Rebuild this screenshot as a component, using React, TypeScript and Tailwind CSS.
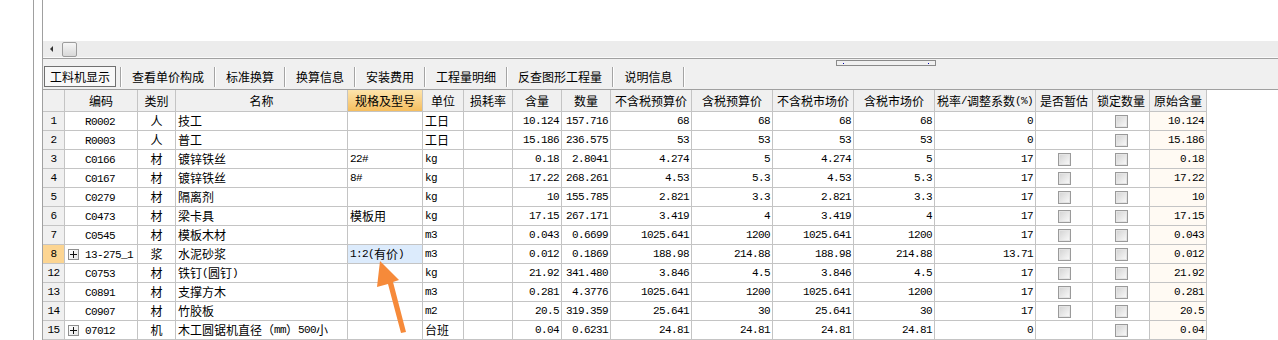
import React from 'react';

type Row = {
  n: string;
  code: string;
  plus?: boolean;
  cat: string;
  name: string;
  spec: string;
  unit: string;
  qty: string;
  amt: string;
  p1: string;
  p2: string;
  p3: string;
  p4: string;
  tax: string;
  est: boolean;
  orig: string;
};

const rows: Row[] = [
  { n: '1', code: 'R0002', cat: '人', name: '技工', spec: '', unit: '工日', qty: '10.124', amt: '157.716', p1: '68', p2: '68', p3: '68', p4: '68', tax: '0', est: false, orig: '10.124' },
  { n: '2', code: 'R0003', cat: '人', name: '普工', spec: '', unit: '工日', qty: '15.186', amt: '236.575', p1: '53', p2: '53', p3: '53', p4: '53', tax: '0', est: false, orig: '15.186' },
  { n: '3', code: 'C0166', cat: '材', name: '镀锌铁丝', spec: '22#', unit: 'kg', qty: '0.18', amt: '2.8041', p1: '4.274', p2: '5', p3: '4.274', p4: '5', tax: '17', est: true, orig: '0.18' },
  { n: '4', code: 'C0167', cat: '材', name: '镀锌铁丝', spec: '8#', unit: 'kg', qty: '17.22', amt: '268.261', p1: '4.53', p2: '5.3', p3: '4.53', p4: '5.3', tax: '17', est: true, orig: '17.22' },
  { n: '5', code: 'C0279', cat: '材', name: '隔离剂', spec: '', unit: 'kg', qty: '10', amt: '155.785', p1: '2.821', p2: '3.3', p3: '2.821', p4: '3.3', tax: '17', est: true, orig: '10' },
  { n: '6', code: 'C0473', cat: '材', name: '梁卡具', spec: '模板用', unit: 'kg', qty: '17.15', amt: '267.171', p1: '3.419', p2: '4', p3: '3.419', p4: '4', tax: '17', est: true, orig: '17.15' },
  { n: '7', code: 'C0545', cat: '材', name: '模板木材', spec: '', unit: 'm3', qty: '0.043', amt: '0.6699', p1: '1025.641', p2: '1200', p3: '1025.641', p4: '1200', tax: '17', est: true, orig: '0.043' },
  { n: '8', code: '13-275_1', plus: true, cat: '浆', name: '水泥砂浆', spec: '1:2(有价)', unit: 'm3', qty: '0.012', amt: '0.1869', p1: '188.98', p2: '214.88', p3: '188.98', p4: '214.88', tax: '13.71', est: true, orig: '0.012' },
  { n: '12', code: 'C0753', cat: '材', name: '铁钉(圆钉)', spec: '', unit: 'kg', qty: '21.92', amt: '341.480', p1: '3.846', p2: '4.5', p3: '3.846', p4: '4.5', tax: '17', est: true, orig: '21.92' },
  { n: '13', code: 'C0891', cat: '材', name: '支撑方木', spec: '', unit: 'm3', qty: '0.281', amt: '4.3776', p1: '1025.641', p2: '1200', p3: '1025.641', p4: '1200', tax: '17', est: true, orig: '0.281' },
  { n: '14', code: 'C0907', cat: '材', name: '竹胶板', spec: '', unit: 'm2', qty: '20.5', amt: '319.359', p1: '25.641', p2: '30', p3: '25.641', p4: '30', tax: '17', est: true, orig: '20.5' },
  { n: '15', code: '07012', plus: true, cat: '机', name: '木工圆锯机直径（mm）500小', spec: '', unit: '台班', qty: '0.04', amt: '0.6231', p1: '24.81', p2: '24.81', p3: '24.81', p4: '24.81', tax: '0', est: false, orig: '0.04' },
];

const headers = ['', '编码', '类别', '名称', '规格及型号', '单位', '损耗率', '含量', '数量', '不含税预算价', '含税预算价', '不含税市场价', '含税市场价', '税率/调整系数(%)', '是否暂估', '锁定数量', '原始含量'];

const widths = [
  'w-[22px]', 'w-[73px]', 'w-[38px]', 'w-[172px]', 'w-[75px]', 'w-[41px]', 'w-[49px]', 'w-[49px]', 'w-[49px]',
  'w-[81px]', 'w-[81px]', 'w-[81px]', 'w-[81px]', 'w-[101px]', 'w-[57px]', 'w-[57px]', 'w-[57px]',
];

const tabs = [
  { label: '查看单价构成', w: 'w-[92px]' },
  { label: '标准换算', w: 'w-[68px]' },
  { label: '换算信息', w: 'w-[68px]' },
  { label: '安装费用', w: 'w-[68px]' },
  { label: '工程量明细', w: 'w-[80px]' },
  { label: '反查图形工程量', w: 'w-[104px]' },
  { label: '说明信息', w: 'w-[69px]' },
];

// ascii runs get a narrow mono face so they sit at half the width of a CJK glyph
const Txt: React.FC<{ s: string }> = ({ s }) => {
  const parts = s.match(/[\x00-\x7f]+|[^\x00-\x7f]+/g) || [];
  return (
    <>
      {parts.map((p, i) =>
        /^[\x00-\x7f]/.test(p) ? (
          <span key={i} className="font-['Liberation_Mono',monospace] text-[11px] tracking-[-0.6px]">{p}</span>
        ) : (
          <span key={i}>{p}</span>
        )
      )}
    </>
  );
};

const Check = () => (
  <div className="w-[13px] h-[13px] border border-[#9a9a9a] bg-linear-to-br from-[#d2d2d2] to-[#fbfbfb] shadow-[inset_0_0_0_1px_#e4e4e4]" />
);

const Plus = () => (
  <div className="w-[11px] h-[11px] border border-[#8f8f8f] bg-linear-to-br from-white to-[#e6e6e6] flex items-center justify-center">
    <svg width="7" height="7" viewBox="0 0 7 7">
      <path d="M0 3.5H7M3.5 0V7" stroke="#111" strokeWidth="1" />
    </svg>
  </div>
);

const cell = 'h-[19px] border-r border-b border-[#c4c4c4] flex items-center shrink-0';

const App: React.FC = () => {
  return (
    <div className="relative w-[1278px] h-[340px] overflow-hidden bg-white flex text-[12px] leading-[14px] text-black font-['Noto_Sans_CJK_SC',sans-serif]">
      <div className="w-[33px] shrink-0 bg-white" />
      <div className="w-[1px] shrink-0 bg-[#a0a0a0]" />
      <div className="w-[8px] shrink-0 bg-white" />
      <div className="flex-1 min-w-0 border-l border-[#a0a0a0] flex flex-col">
        {/* upper pane */}
        <div className="h-[43px] bg-white" />
        <div className="h-[17px] bg-[#ececec] flex items-center">
          <svg width="4" height="6" viewBox="0 0 4 6" className="ml-[7px]">
            <path d="M3 0V6L0 3Z" fill="#333" />
          </svg>
          <div className="ml-[8px] w-[15px] h-[15px] rounded-[2px] border border-[#9c9c9c] bg-linear-to-b from-[#f6f6f6] to-[#d8d8d8]" />
        </div>
        <div className="h-[1px] bg-[#fafafa]" />
        <div className="h-[1px] bg-[#a0a0a0]" />

        {/* lower pane */}
        <div className="flex-1 bg-[#f0f0f0] flex flex-col">
          <div className="h-[1px]" />
          <div className="h-[6px] flex">
            <div className="ml-[793px] w-[100px] h-[6px] border border-[#8a8a8a] bg-[#f0f0f0] flex justify-between px-[6px] pt-[2px]">
              <div className="w-[1px] h-[1px] bg-[#0000b0]" />
              <div className="w-[1px] h-[1px] bg-[#0000b0]" />
            </div>
          </div>
          <div className="h-[21px] flex items-center">
            <div className="ml-[1px] w-[72px] h-[21px] border border-[#707070] bg-[#f8f8f8] flex items-center justify-center">
              工料机显示
            </div>
            <div className="ml-[4px] w-[1px] h-[20px] bg-[#a4a4a4]" />
            <div className="w-[1px] h-[20px] bg-white" />
            {tabs.map((t) => (
              <React.Fragment key={t.label}>
                <div className={`${t.w} h-[21px] flex items-center justify-center`}>{t.label}</div>
                <div className="w-[1px] h-[20px] bg-[#a4a4a4]" />
                <div className="w-[1px] h-[20px] bg-white" />
              </React.Fragment>
            ))}
          </div>
          <div className="h-[2px]" />

          {/* grid */}
          <div className="flex-1 bg-white border-t border-[#a0a0a0]">
            <div className="flex">
              {headers.map((h, i) => (
                <div
                  key={i}
                  className={`${widths[i]} h-[22px] border-r border-b border-[#c4c4c4] flex items-center justify-center shrink-0 ${
                    i === 4 ? 'bg-linear-to-b from-[#fde4ab] to-[#f5be5e]' : 'bg-[#f0f0f0]'
                  }`}
                >
                  <Txt s={h} />
                </div>
              ))}
            </div>
            {rows.map((r) => {
              const sel = r.n === '8';
              return (
                <div key={r.n} className="flex">
                  <div className={`${widths[0]} ${cell} justify-center ${sel ? 'bg-[#fcd592]' : 'bg-[#f0f0f0]'}`}>
                    <Txt s={r.n} />
                  </div>
                  <div className={`${widths[1]} ${cell} pl-[3px]`}>
                    <div className="w-[11px] shrink-0">{r.plus && <Plus />}</div>
                    <div className="ml-[6px] whitespace-nowrap"><Txt s={r.code} /></div>
                  </div>
                  <div className={`${widths[2]} ${cell} justify-center`}>{r.cat}</div>
                  <div className={`${widths[3]} ${cell} pl-[2px] whitespace-nowrap overflow-hidden`}>
                    <Txt s={r.name} />
                  </div>
                  <div className={`${widths[4]} ${cell} pl-[2px] whitespace-nowrap ${sel ? 'bg-[#dcebfc]' : ''}`}>
                    <Txt s={r.spec} />
                  </div>
                  <div className={`${widths[5]} ${cell} pl-[2px]`}>
                    <Txt s={r.unit} />
                  </div>
                  <div className={`${widths[6]} ${cell}`} />
                  <div className={`${widths[7]} ${cell} justify-end pr-[2px]`}><Txt s={r.qty} /></div>
                  <div className={`${widths[8]} ${cell} justify-end pr-[2px]`}><Txt s={r.amt} /></div>
                  <div className={`${widths[9]} ${cell} justify-end pr-[2px]`}><Txt s={r.p1} /></div>
                  <div className={`${widths[10]} ${cell} justify-end pr-[2px]`}><Txt s={r.p2} /></div>
                  <div className={`${widths[11]} ${cell} justify-end pr-[2px]`}><Txt s={r.p3} /></div>
                  <div className={`${widths[12]} ${cell} justify-end pr-[2px]`}><Txt s={r.p4} /></div>
                  <div className={`${widths[13]} ${cell} justify-end pr-[2px]`}><Txt s={r.tax} /></div>
                  <div className={`${widths[14]} ${cell} justify-center`}>{r.est && <Check />}</div>
                  <div className={`${widths[15]} ${cell} justify-center`}><Check /></div>
                  <div className={`${widths[16]} ${cell} justify-end pr-[2px] bg-[#fffaf3]`}><Txt s={r.orig} /></div>
                </div>
              );
            })}
          </div>
        </div>
      </div>

      {/* annotation arrow */}
      <svg className="absolute left-0 top-0 pointer-events-none" width="1278" height="340" viewBox="0 0 1278 340">
        <polygon points="380,261 399,280 393,282 406,332 401,333 388,284 377,287" fill="#f68a3a" />
      </svg>
    </div>
  );
};

export default App;
